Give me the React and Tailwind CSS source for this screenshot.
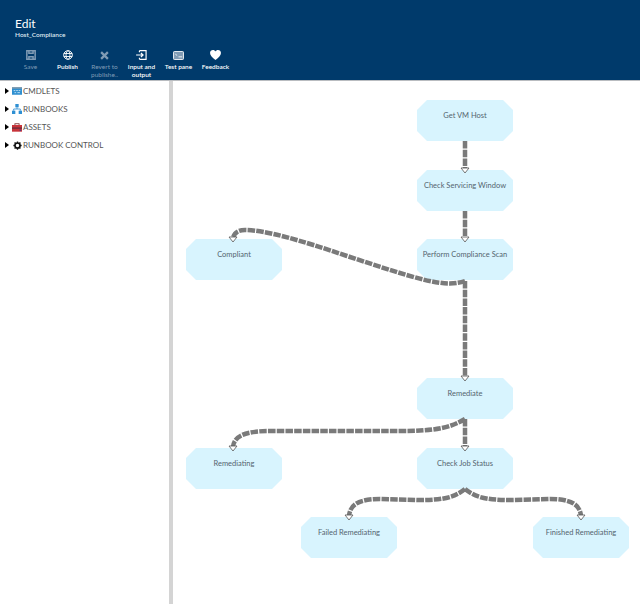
const NODE_BASE =
  'absolute w-[96px] h-[41px] bg-[#d8f4fe] [clip-path:polygon(10px_0,86px_0,100%_10px,100%_31px,86px_100%,10px_100%,0_31px,0_10px)] pt-[10px] text-center text-[7.5px] leading-[12px] whitespace-nowrap text-[#54646f]';

const LINKS = [
  'M465 141 L465 169',
  'M465 211 L465 238',
  'M465 281 C445 288 420 280 347 256 C300 240 265 230 245 230 C238 230 234 233 233 238',
  'M465 281 L465 377',
  'M465 419 C450 428 435 431 400 431 L270 431 C245 431 234 436 233 447',
  'M465 419 L465 447',
  'M465 489 C455 497 445 500 420 500 L380 499 C358 499 350 505 349 516',
  'M465 489 C475 497 485 500 510 500 L550 499 C572 499 580 505 581 516',
];

const HEADS = [
  [465, 170],
  [465, 239],
  [233, 239],
  [465, 378],
  [233, 448],
  [465, 448],
  [349, 517],
  [581, 517],
];

function ToolButton({ label, muted, children }) {
  return (
    <div className={`flex w-[37px] flex-col items-center text-center ${muted ? 'text-[#7f9bb5]' : 'text-white'}`}>
      <div className="flex h-[12px] items-center justify-center">{children}</div>
      <span className={`mt-[2px] text-[6.5px] leading-[8px] ${muted ? 'font-normal' : 'font-semibold'}`}>{label}</span>
    </div>
  );
}

function TreeRow({ label, children }) {
  return (
    <div className="flex h-[18px] items-center">
      <span className="ml-[5px] mr-[3px] h-0 w-0 border-y-[3.5px] border-l-[4px] border-y-transparent border-l-black" />
      <span className="flex w-[10px] justify-center">{children}</span>
      <span className="ml-[1px] text-[8px] text-[#555]">{label}</span>
    </div>
  );
}

export default function App() {
  return (
    <div className="flex h-[604px] w-[640px] flex-col overflow-hidden bg-white font-['Lato',sans-serif]">
      {/* Header */}
      <div className="h-[81px] shrink-0 border-b border-[#b9bcc0] bg-[#003a6b] pl-[12px]">
        <div className="pl-[3px] pt-[17px] text-[12px] leading-[14px] text-white">Edit</div>
        <div className="pl-[3px] text-[6.5px] font-semibold leading-[8px] text-[#dfe8f0]">Host_Compliance</div>
        <div className="mt-[10px] flex">
          <ToolButton label="Save" muted>
            <svg width="10" height="10" viewBox="0 0 12 12" fill="none" stroke="currentColor" strokeWidth="1.8">
              <path d="M1 1h10v10H1z" />
              <path d="M3.5 1v3h5V1M3.5 11V8h5v3" />
            </svg>
          </ToolButton>
          <ToolButton label="Publish">
            <svg width="10" height="10" viewBox="0 0 12 12" fill="none" stroke="currentColor" strokeWidth="1.1">
              <circle cx="6" cy="6" r="5.2" />
              <ellipse cx="6" cy="6" rx="2.4" ry="5.2" />
              <path d="M1 4.2h10M1 7.8h10" />
            </svg>
          </ToolButton>
          <ToolButton label="Revert to publishe.." muted>
            <svg width="9" height="9" viewBox="0 0 12 12" fill="none" stroke="currentColor" strokeWidth="3">
              <path d="M1.5 1.5l9 9M10.5 1.5l-9 9" />
            </svg>
          </ToolButton>
          <ToolButton label="Input and output">
            <svg width="11" height="10" viewBox="0 0 13 12" fill="none" stroke="currentColor" strokeWidth="1.4">
              <path d="M4 .8h8v10.4H4M4 .8v2M4 9.2v2" />
              <path d="M0 6h8M5.8 3.6L8.4 6 5.8 8.4" />
            </svg>
          </ToolButton>
          <ToolButton label="Test pane">
            <svg width="11" height="9" viewBox="0 0 12 10">
              <rect x=".5" y=".5" width="11" height="9" rx="1" fill="#7f9bb5" stroke="#fff" />
              <path d="M6 6.5h4M2.5 3.5l2 1.5" stroke="#fff" strokeWidth=".9" fill="none" />
            </svg>
          </ToolButton>
          <ToolButton label="Feedback">
            <svg width="11" height="10" viewBox="0 0 12 11" fill="currentColor">
              <path d="M6 11C2.5 8.2 0 6.2 0 3.3 0 1.4 1.4 0 3.2 0 4.4 0 5.4.6 6 1.6 6.6.6 7.6 0 8.8 0 10.6 0 12 1.4 12 3.3c0 2.9-2.5 4.9-6 7.7z" />
            </svg>
          </ToolButton>
        </div>
      </div>

      <div className="flex min-h-0 flex-1">
        {/* Sidebar */}
        <div className="w-[169px] shrink-0 pt-[1px]">
          <TreeRow label="CMDLETS">
            <svg width="10" height="8" viewBox="0 0 12 9">
              <rect width="12" height="9" fill="#2f8fd0" />
              <rect width="12" height="1.6" fill="#8a9aa8" />
              <path d="M2 4h2M5 4h2M8 4h2M3 6.5h2M6.5 6.5h3" stroke="#d8eefa" strokeWidth="1" />
            </svg>
          </TreeRow>
          <TreeRow label="RUNBOOKS">
            <svg width="10" height="10" viewBox="0 0 12 12" fill="#2e8fd3">
              <rect x="4" y="0" width="4" height="4" />
              <rect x="0" y="8" width="4" height="4" />
              <rect x="8" y="8" width="4" height="4" />
              <path d="M2 8V6h8v2M6 4v2" fill="none" stroke="#2e8fd3" />
            </svg>
          </TreeRow>
          <TreeRow label="ASSETS">
            <svg width="10" height="9" viewBox="0 0 12 10">
              <rect x="3.5" y=".5" width="5" height="3" fill="none" stroke="#7a2a2a" />
              <rect y="2" width="12" height="8" fill="#c8343a" />
              <rect y="5" width="12" height="1.4" fill="#5a2a3a" />
              <rect x="9" y="7.5" width="2" height="1.5" fill="#4a3a8a" />
            </svg>
          </TreeRow>
          <TreeRow label="RUNBOOK CONTROL">
            <svg width="9" height="9" viewBox="0 0 12 12">
              <circle cx="6" cy="6" r="3.4" fill="none" stroke="#111" strokeWidth="2.2" />
              <path
                d="M6 .5v2.4M6 9.1v2.4M.5 6h2.4M9.1 6h2.4M2.1 2.1l1.7 1.7M8.2 8.2l1.7 1.7M2.1 9.9l1.7-1.7M8.2 3.8l1.7-1.7"
                stroke="#111"
                strokeWidth="1.8"
              />
            </svg>
          </TreeRow>
        </div>

        {/* Splitter */}
        <div className="w-[4px] shrink-0 bg-[#d4d4d4]" />

        {/* Canvas, origin at page (173,81) */}
        <div className="relative min-w-0 flex-1">
          <div className={`${NODE_BASE} left-[244px] top-[19px]`}>Get VM Host</div>
          <div className={`${NODE_BASE} left-[244px] top-[89px]`}>Check Servicing Window</div>
          <div className={`${NODE_BASE} left-[13px] top-[158px]`}>Compliant</div>
          <div className={`${NODE_BASE} left-[244px] top-[158px]`}>Perform Compliance Scan</div>
          <div className={`${NODE_BASE} left-[244px] top-[297px]`}>Remediate</div>
          <div className={`${NODE_BASE} left-[13px] top-[367px]`}>Remediating</div>
          <div className={`${NODE_BASE} left-[244px] top-[367px]`}>Check Job Status</div>
          <div className={`${NODE_BASE} left-[128px] top-[436px]`}>Failed Remediating</div>
          <div className={`${NODE_BASE} left-[360px] top-[436px]`}>Finished Remediating</div>

          <svg className="pointer-events-none absolute inset-0" width="467" height="523" viewBox="173 81 467 523" fill="none">
            {LINKS.map((d) => (
              <path key={d} d={d} stroke="#7a7a7a" strokeWidth="4.5" strokeDasharray="7.5 1.2" />
            ))}
            {HEADS.map(([x, y]) => (
              <path
                key={`${x}-${y}`}
                d={`M${x - 4} ${y - 2}L${x + 4} ${y - 2}L${x} ${y + 3}Z`}
                fill="#fff"
                stroke="#555"
                strokeWidth="0.8"
              />
            ))}
          </svg>
        </div>
      </div>
    </div>
  );
}
